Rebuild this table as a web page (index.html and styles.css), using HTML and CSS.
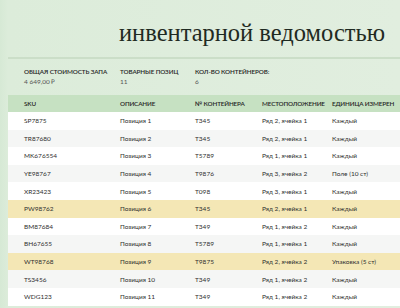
FILE: index.html
```html
<!DOCTYPE html>
<html lang="ru">
<head>
<meta charset="utf-8">
<link rel="stylesheet" href="styles.css">
</head>
<body>
<div class="page">
  <header class="title-bar">
    <h1 class="title">инвентарной ведомостью</h1>
  </header>
  <section class="summary">
    <div class="sum-item"><div class="sum-label">ОБЩАЯ СТОИМОСТЬ ЗАПА</div><div class="sum-value">4 649,00 ₽</div></div>
    <div class="sum-item"><div class="sum-label">ТОВАРНЫЕ ПОЗИЦ</div><div class="sum-value">11</div></div>
    <div class="sum-item"><div class="sum-label">КОЛ-ВО КОНТЕЙНЕРОВ:</div><div class="sum-value">6</div></div>
  </section>
  <div class="table">
    <div class="row head"><div>SKU</div><div>ОПИСАНИЕ</div><div>№ КОНТЕЙНЕРА</div><div>МЕСТОПОЛОЖЕНИЕ</div><div>ЕДИНИЦА ИЗМЕРЕН</div></div>
    <div class="row"><div>SP7875</div><div>Позиция 1</div><div>T345</div><div>Ряд 2, ячейка 1</div><div>Каждый</div></div>
    <div class="row alt"><div>TR87680</div><div>Позиция 2</div><div>T345</div><div>Ряд 2, ячейка 1</div><div>Каждый</div></div>
    <div class="row"><div>MK676554</div><div>Позиция 3</div><div>T5789</div><div>Ряд 1, ячейка 1</div><div>Каждый</div></div>
    <div class="row alt"><div>YE98767</div><div>Позиция 4</div><div>T9876</div><div>Ряд 3, ячейка 2</div><div>Поле (10 ст)</div></div>
    <div class="row"><div>XR23423</div><div>Позиция 5</div><div>T098</div><div>Ряд 3, ячейка 1</div><div>Каждый</div></div>
    <div class="row hl"><div>PW98762</div><div>Позиция 6</div><div>T345</div><div>Ряд 2, ячейка 1</div><div>Каждый</div></div>
    <div class="row"><div>BM87684</div><div>Позиция 7</div><div>T349</div><div>Ряд 1, ячейка 2</div><div>Каждый</div></div>
    <div class="row alt"><div>BH67655</div><div>Позиция 8</div><div>T5789</div><div>Ряд 1, ячейка 1</div><div>Каждый</div></div>
    <div class="row hl"><div>WT98768</div><div>Позиция 9</div><div>T9875</div><div>Ряд 2, ячейка 2</div><div>Упаковка (5 ст)</div></div>
    <div class="row alt"><div>TS3456</div><div>Позиция 10</div><div>T349</div><div>Ряд 1, ячейка 2</div><div>Каждый</div></div>
    <div class="row"><div>WDG123</div><div>Позиция 11</div><div>T349</div><div>Ряд 1, ячейка 2</div><div>Каждый</div></div>
  </div>
</div>
</body>
</html>
```

FILE: styles.css
```css
html, body {
  margin: 0;
  padding: 0;
}
body {
  background: linear-gradient(90deg, #d6e9d5 0px, #dcecda 8px, #e1eedf 100%);
  font-family: "Lato", "Open Sans", "Liberation Sans", sans-serif;
  color: #2f2f2f;
  width: 400px;
  height: 308px;
  overflow: hidden;
}
.page {
  margin-left: 8px;
}
.title-bar {
  border-bottom: 2px solid #cbdec8;
  box-sizing: border-box;
  height: 59px;
}
.title {
  margin: 0;
  padding: 18px 0 0 111px;
  font-family: "Liberation Serif", "DejaVu Serif", serif;
  font-weight: normal;
  font-size: 24.5px;
  line-height: 30px;
  color: #1f2a22;
  white-space: nowrap;
}
.summary {
  display: grid;
  grid-template-columns: 96px 75px 1fr;
  height: 36px;
  padding-top: 8px;
  box-sizing: border-box;
}
.sum-item {
  padding-left: 16px;
  white-space: nowrap;
}
.sum-label {
  font-size: 6.3px;
  line-height: 10px;
  font-weight: 600;
  letter-spacing: -0.1px;
  color: #262626;
}
.sum-value {
  font-size: 6.5px;
  line-height: 9px;
  color: #555;
}
.row {
  display: grid;
  grid-template-columns: 96px 75px 67px 70px 84px;
  height: 17.6px;
  align-items: center;
  background: #ffffff;
  font-size: 6.5px;
}
.row > div {
  padding-left: 16px;
  white-space: nowrap;
}
.row.alt {
  background: #f5f6f5;
}
.row.hl {
  background: #f4e7b5;
}
.row.head {
  background: #c6e1c2;
  height: 17px;
  font-size: 6.3px;
  font-weight: 600;
  letter-spacing: -0.15px;
  color: #262626;
}
```
